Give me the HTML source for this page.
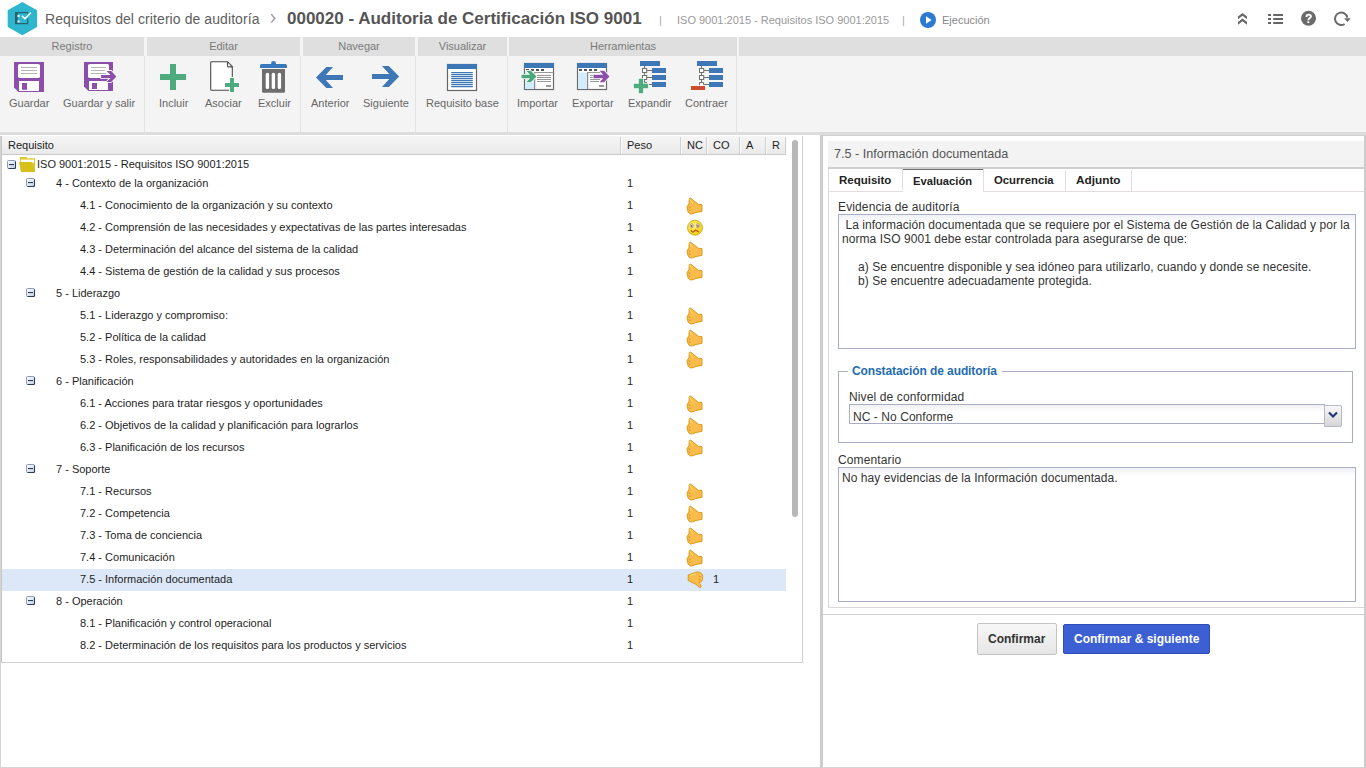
<!DOCTYPE html>
<html><head><meta charset="utf-8">
<style>
*{box-sizing:border-box;margin:0;padding:0}
html,body{width:1366px;height:768px;overflow:hidden;background:#fff;font-family:"Liberation Sans",sans-serif;position:relative}
.a{position:absolute}
.t{position:absolute;white-space:pre;line-height:1}
svg{position:absolute;overflow:visible}
/* toolbar */
#tb{position:absolute;left:0;top:37px;width:1366px;height:95px;background:#f4f4f4}
.gh{position:absolute;top:37px;height:19px;background:#dfdfdf;color:#7a7a7a;font-size:11px;text-align:center;line-height:19px}
.sep{position:absolute;top:56px;height:76px;width:1px;background:#e3e3e3}
.gt{font-size:11px;color:#222}
.gr{font-size:11px;color:#1e1e1e}
.tab{font-weight:bold;color:#222}
.fl{font-size:12px;color:#333;letter-spacing:0.13px}
.fx{font-size:12px;color:#333;letter-spacing:0.06px}
.lbl{position:absolute;top:97px;font-size:11px;color:#666;white-space:pre;line-height:12px}
</style></head><body>

<!-- ===== TOP BAR ===== -->
<svg style="left:0;top:0" width="50" height="37" viewBox="0 0 50 37">
  <polygon points="22.4,3 36.2,10.9 36.2,26.5 22.4,34.3 8.6,26.5 8.6,10.9" fill="#2db6cd" stroke="#2db6cd" stroke-width="1.8" stroke-linejoin="round"/>
  <rect x="15.6" y="12.6" width="12" height="11" fill="none" stroke="#2a5f73" stroke-width="1.2"/>
  <rect x="15" y="12" width="2.8" height="12" fill="#2a5f73"/>
  <rect x="17.4" y="15" width="2.2" height="1.9" fill="#e8f7fa"/>
  <rect x="17.4" y="20.5" width="2.2" height="1.9" fill="#e8f7fa"/>
  <polyline points="21.8,15.9 25,18.7 30.8,12.8" fill="none" stroke="#2db6cd" stroke-width="3.4"/>
  <polyline points="21.8,15.9 25,18.7 30.8,12.8" fill="none" stroke="#fff" stroke-width="1.6"/>
</svg>
<div class="t" style="left:45px;top:12px;font-size:14px;color:#606060;letter-spacing:0.08px">Requisitos del criterio de auditoría</div>
<svg style="left:268px;top:13px" width="10" height="12" viewBox="0 0 10 12"><polygon points="2.3,1 4.2,1 7.8,5.4 4.2,9.8 2.3,9.8 5.6,5.4" fill="#a4a4a4"/></svg>
<div class="t" style="left:287px;top:10px;font-size:17px;font-weight:bold;color:#555">000020 - Auditoria de Certificación ISO 9001</div>
<div class="t" style="left:659px;top:15px;font-size:11px;color:#aaa">|</div>
<div class="t" style="left:677px;top:15px;font-size:11px;color:#999">ISO 9001:2015 - Requisitos ISO 9001:2015</div>
<div class="t" style="left:902px;top:15px;font-size:11px;color:#aaa">|</div>
<svg style="left:920px;top:12px" width="17" height="17" viewBox="0 0 17 17"><circle cx="8" cy="8" r="8" fill="#2b7bd0"/><polygon points="6,4.2 11.6,8 6,11.8" fill="#fff"/></svg>
<div class="t" style="left:942px;top:15px;font-size:11px;color:#888">Ejecución</div>

<!-- right icons -->
<svg style="left:1237px;top:12px" width="12" height="14" viewBox="0 0 12 14">
  <polygon points="1,4.5 5.5,1 10,4.5 10,7.2 5.5,3.8 1,7.2" fill="#666"/>
  <polygon points="1,10 5.5,6.5 10,10 10,12.8 5.5,9.3 1,12.8" fill="#666"/>
</svg>
<svg style="left:1268px;top:13px" width="16" height="12" viewBox="0 0 16 12">
  <rect x="0" y="1" width="3" height="2" fill="#666"/><rect x="5.2" y="1" width="9.8" height="2" fill="#666"/>
  <rect x="0" y="5" width="3" height="2" fill="#666"/><rect x="5.2" y="5" width="9.8" height="2" fill="#666"/>
  <rect x="0" y="9" width="3" height="2" fill="#666"/><rect x="5.2" y="9" width="9.8" height="2" fill="#666"/>
</svg>
<svg style="left:1300px;top:10px" width="17" height="17" viewBox="0 0 17 17">
  <circle cx="8.5" cy="8.3" r="7.5" fill="#6b6b6b"/>
  <path d="M6.5,6.9 C6.5,5.1 7.5,4.6 8.7,4.6 C10,4.6 10.9,5.3 10.9,6.5 C10.9,8 8.3,8.2 8.3,10.3" fill="none" stroke="#fff" stroke-width="1.9"/>
  <rect x="7.3" y="11.3" width="2" height="1.8" fill="#fff"/>
</svg>
<svg style="left:1332px;top:10px" width="20" height="17" viewBox="0 0 20 17">
  <path d="M12.6,14 A6.2,6.2 0 1 1 15.3,7.6" fill="none" stroke="#6b6b6b" stroke-width="2"/>
  <polygon points="12.1,8.2 18.8,8.2 15.5,11.9" fill="#6b6b6b"/>
</svg>

<!-- ===== TOOLBAR ===== -->
<div id="tb"></div>
<div class="gh" style="left:0;width:144px">Registro</div>
<div class="gh" style="left:147px;width:153px">Editar</div>
<div class="gh" style="left:303px;width:112px">Navegar</div>
<div class="gh" style="left:418px;width:89px">Visualizar</div>
<div class="gh" style="left:509px;width:228px">Herramientas</div>
<div class="gh" style="left:739px;width:627px"></div>
<div class="sep" style="left:144px"></div>
<div class="sep" style="left:300px"></div>
<div class="sep" style="left:415px"></div>
<div class="sep" style="left:507px"></div>
<div class="sep" style="left:736px"></div>
<div class="a" style="left:0;top:132px;width:1366px;height:3px;background:#dcdcdc"></div>
<div class="a" style="left:820px;top:135px;width:546px;height:1px;background:#d2d2d2"></div>

<!-- labels -->
<div class="lbl" style="left:9px">Guardar</div>
<div class="lbl" style="left:63px">Guardar y salir</div>
<div class="lbl" style="left:159px">Incluir</div>
<div class="lbl" style="left:205px">Asociar</div>
<div class="lbl" style="left:258px">Excluir</div>
<div class="lbl" style="left:311px">Anterior</div>
<div class="lbl" style="left:363px">Siguiente</div>
<div class="lbl" style="left:426px">Requisito base</div>
<div class="lbl" style="left:517px">Importar</div>
<div class="lbl" style="left:572px">Exportar</div>
<div class="lbl" style="left:628px">Expandir</div>
<div class="lbl" style="left:685px">Contraer</div>

<!-- ICONS -->
<!-- Guardar floppy -->
<svg style="left:0;top:0" width="1366" height="136" viewBox="0 0 1366 136">
  <path d="M14,62 H44 V92 H18.5 L14,87.5 Z" fill="#8b4fab"/>
  <rect x="18" y="64" width="22" height="14" rx="1.8" fill="#fff"/>
  <rect x="21" y="67" width="16" height="1" fill="#b4b4b4"/>
  <rect x="21" y="70" width="16" height="1" fill="#b4b4b4"/>
  <rect x="21" y="73" width="16" height="1" fill="#b4b4b4"/>
  <rect x="19" y="81" width="20" height="10" fill="#fff"/>
  <rect x="22" y="83" width="5" height="6.8" fill="#8b4fab"/>
  <!-- Guardar y salir -->
  <path d="M84,62 H113 V91 H88.5 L84,86.5 Z" fill="#8b4fab"/>
  <rect x="88" y="64" width="21" height="14" rx="1.8" fill="#fff"/>
  <rect x="91" y="67" width="15" height="1" fill="#b4b4b4"/>
  <rect x="91" y="70" width="15" height="1" fill="#b4b4b4"/>
  <rect x="91" y="73" width="15" height="1" fill="#b4b4b4"/>
  <rect x="89" y="81" width="19" height="9" fill="#fff"/>
  <rect x="92" y="83" width="5" height="6" fill="#8b4fab"/>
  <path d="M101.1,74.9 H110.6 L106.4,70.9 H111.2 L116.4,76.4 L111.2,81.9 H106.4 L110.6,77.9 H101.1 Z" fill="#8b4fab" stroke="#fff" stroke-width="1.6" stroke-linejoin="miter" paint-order="stroke"/>
  <!-- Incluir plus -->
  <rect x="170" y="64" width="6" height="26" fill="#4dab7e"/>
  <rect x="160" y="74" width="26" height="6" fill="#4dab7e"/>
  <!-- Asociar doc -->
  <path d="M210.7,61.7 H227.5 L232.3,66.5 V90.3 H210.7 Z" fill="#fff"/>
  <path d="M232.3,77 V66.5 L227.5,61.7 H211.5 Q210.7,61.7 210.7,62.5 V89.5 Q210.7,90.3 211.5,90.3 H229" fill="none" stroke="#4a4a4a" stroke-width="1.1"/>
  <path d="M227.5,61.7 V66 Q227.5,66.9 228.4,66.9 H232.3" fill="none" stroke="#4a4a4a" stroke-width="1.1"/>
  <path d="M230,78 H234 V83 H239 V87 H234 V92 H230 V87 H225 V83 H230 Z" fill="#4dab7e" stroke="#fff" stroke-width="1.2" paint-order="stroke"/>
  <!-- Excluir trash -->
  <path d="M260,68 V65.5 Q260,64 261.5,64 H271.2 V62.8 Q271.2,61 273.5,61 Q275.9,61 275.9,62.8 V64 H285.4 Q287,64 287,65.5 V68 Z" fill="#3a78be"/>
  <path d="M262,69 H285 V91.2 Q285,92.7 283.5,92.7 H263.5 Q262,92.7 262,91.2 Z" fill="#6e6e6e"/>
  <rect x="265.7" y="72.7" width="3.4" height="16.4" rx="1.7" fill="#fff"/>
  <rect x="271.7" y="72.7" width="3.4" height="16.4" rx="1.7" fill="#fff"/>
  <rect x="277.7" y="72.7" width="3.4" height="16.4" rx="1.7" fill="#fff"/>
  <!-- Anterior -->
  <path d="M316,77.5 L326.3,67 H333 L325.8,74.9 H343 V80.1 H325.8 L333,88 H326.3 Z" fill="#3d77b5"/>
  <!-- Siguiente -->
  <path d="M399.2,76.5 L388.8,66 H382 L389.3,74 H372 V79 H389.3 L382,87 H388.8 Z" fill="#3d77b5"/>
  <!-- Requisito base window -->
  <rect x="447.5" y="64.5" width="29" height="26" fill="#fff" stroke="#666" stroke-width="1.2"/>
  <rect x="447" y="64" width="30" height="5" fill="#3d77b5"/>
  <g fill="#3d77b5">
    <rect x="451" y="72" width="22" height="1.2" rx="0.6"/><rect x="451" y="74" width="22" height="1.2" rx="0.6"/>
    <rect x="451" y="76" width="22" height="1.2" rx="0.6"/><rect x="451" y="78" width="22" height="1.2" rx="0.6"/>
    <rect x="451" y="80" width="22" height="1.2" rx="0.6"/><rect x="451" y="82" width="22" height="1.2" rx="0.6"/>
    <rect x="451" y="84" width="22" height="1.2" rx="0.6"/><rect x="451" y="86" width="22" height="1.2" rx="0.6"/>
  </g>
  <!-- Importar -->
  <rect x="524.5" y="63.5" width="29" height="26" fill="#fff" stroke="#6a6a6a" stroke-width="1.2"/>
  <rect x="525" y="72.5" width="9.5" height="16.5" fill="#d2ecfb"/>
  <rect x="534.2" y="72" width="1" height="17" fill="#777"/>
  <rect x="534" y="72" width="19.5" height="1" fill="#999"/>
  <rect x="524" y="63" width="30" height="5" fill="#3d77b5"/>
  <g fill="#555"><rect x="526" y="69" width="3" height="2"/><rect x="531" y="69" width="3" height="2"/><rect x="536" y="69" width="3" height="2"/><rect x="541" y="69" width="3" height="2"/></g>
  <g fill="#999"><rect x="537" y="75" width="14" height="1"/><rect x="537" y="77" width="14" height="1"/><rect x="537" y="79" width="14" height="1"/><rect x="537" y="81" width="14" height="1"/><rect x="546" y="85" width="5" height="2"/></g>
  <path d="M521.5,74.8 H530 L526.4,70.8 H530.8 L536.5,76.5 L530.8,82.2 H526.4 L530,78.2 H521.5 Z" fill="#4aa97b" stroke="#fff" stroke-width="1.4" stroke-linejoin="round" paint-order="stroke"/>
  <!-- Exportar -->
  <rect x="577.5" y="63.5" width="29" height="26" fill="#fff" stroke="#6a6a6a" stroke-width="1.2"/>
  <rect x="578" y="72.5" width="9.5" height="16.5" fill="#d2ecfb"/>
  <rect x="587.2" y="72" width="1" height="17" fill="#777"/>
  <rect x="587" y="72" width="19.5" height="1" fill="#999"/>
  <rect x="577" y="63" width="30" height="5" fill="#3d77b5"/>
  <g fill="#555"><rect x="579" y="69" width="3" height="2"/><rect x="584" y="69" width="3" height="2"/><rect x="589" y="69" width="3" height="2"/><rect x="594" y="69" width="3" height="2"/></g>
  <g fill="#999"><rect x="590" y="75" width="3" height="1"/><rect x="590" y="77" width="3" height="1"/><rect x="590" y="79" width="10" height="1"/><rect x="590" y="81" width="9" height="1"/><rect x="599" y="85" width="5" height="2"/></g>
  <path d="M593.5,74.8 H603.2 L599.6,70.8 H604 L609.5,76.5 L604,82.2 H599.6 L603.2,78.2 H593.5 Z" fill="#8b4fab" stroke="#fff" stroke-width="1.4" stroke-linejoin="round" paint-order="stroke"/>
  <!-- Expandir -->
  <g fill="#3d77b5">
    <rect x="640" y="61" width="20" height="5"/>
    <rect x="652" y="68" width="14" height="5"/><rect x="652" y="75" width="14" height="5"/><rect x="652" y="82" width="14" height="5"/>
  </g>
  <g fill="none" stroke="#707070" stroke-width="1">
    <path d="M644.6,66 V68.5 M644.6,72.5 V75.5 M644.6,79.5 V82.5 H647 M646.8,70.5 H652 M646.8,77.5 H652 M649,84.5 H652"/>
    <rect x="642.5" y="68.5" width="4.2" height="4" fill="#fff"/><rect x="642.5" y="75.5" width="4.2" height="4" fill="#fff"/>
  </g>
  <path d="M638.8,78.8 H643.2 V83.8 H648.2 V88.2 H643.2 V93.2 H638.8 V88.2 H633.8 V83.8 H638.8 Z" fill="#4dab7e" stroke="#fff" stroke-width="1.2" paint-order="stroke"/>
  <!-- Contraer -->
  <g fill="#3d77b5">
    <rect x="697" y="61" width="20" height="5"/>
    <rect x="709" y="68" width="14" height="5"/><rect x="709" y="75" width="14" height="5"/><rect x="709" y="82" width="14" height="5"/>
  </g>
  <g fill="none" stroke="#707070" stroke-width="1">
    <path d="M701.5,66 V68.5 M701.5,72.5 V75.5 M701.5,79.5 V82.5 M699.5,85 V82.5 H703.5 V84.5 H709 M703.7,70.5 H709 M703.7,77.5 H709"/>
    <rect x="699.5" y="68.5" width="4.2" height="4" fill="#fff"/><rect x="699.5" y="75.5" width="4.2" height="4" fill="#fff"/>
  </g>
  <rect x="691" y="86" width="14" height="4" fill="#d04a2c"/>
</svg>


<!-- ===== LEFT PANEL ===== -->
<!-- GRID -->
<div class="a" style="left:0;top:136px;width:1px;height:632px;background:#d4d4d4"></div>
<div class="a" style="left:0;top:767px;width:821px;height:1px;background:#d4d4d4"></div>
<div class="a" style="left:1px;top:136px;width:802px;height:527px;border:1px solid #cfcfcf;border-top:0;border-left:1px solid #c4c4c4;background:#fff"></div>
<div class="a" style="left:2px;top:136px;width:784px;height:19px;background:linear-gradient(#f6f6f6,#e9e9e9);border-bottom:1px solid #c9c9c9"></div>
<div class="a" style="left:620px;top:137px;width:1px;height:17px;background:#d0d0d0"></div>
<div class="a" style="left:621px;top:137px;width:1px;height:17px;background:#fafafa"></div>
<div class="a" style="left:680px;top:137px;width:1px;height:17px;background:#d0d0d0"></div>
<div class="a" style="left:681px;top:137px;width:1px;height:17px;background:#fafafa"></div>
<div class="a" style="left:706px;top:137px;width:1px;height:17px;background:#d0d0d0"></div>
<div class="a" style="left:707px;top:137px;width:1px;height:17px;background:#fafafa"></div>
<div class="a" style="left:739px;top:137px;width:1px;height:17px;background:#d0d0d0"></div>
<div class="a" style="left:740px;top:137px;width:1px;height:17px;background:#fafafa"></div>
<div class="a" style="left:765px;top:137px;width:1px;height:17px;background:#d0d0d0"></div>
<div class="a" style="left:766px;top:137px;width:1px;height:17px;background:#fafafa"></div>
<div class="a" style="left:785px;top:137px;width:1px;height:17px;background:#d0d0d0"></div>
<div class="a" style="left:786px;top:137px;width:1px;height:17px;background:#fafafa"></div>
<div class="t gt" style="left:8px;top:140px">Requisito</div>
<div class="t gt" style="left:627px;top:140px">Peso</div>
<div class="t gt" style="left:687px;top:140px">NC</div>
<div class="t gt" style="left:713px;top:140px">CO</div>
<div class="t gt" style="left:746px;top:140px">A</div>
<div class="t gt" style="left:772px;top:140px">R</div>
<div class="a" style="left:792px;top:140px;width:6px;height:377px;background:#b8b8b8;border-radius:3px"></div>
<div class="a" style="left:2px;top:569px;width:784px;height:22px;background:#dce8f8"></div>
<svg style="left:7px;top:160px" width="9" height="9" viewBox="0 0 9 9"><defs><linearGradient id="eg" x1="0" y1="0" x2="1" y2="1"><stop offset="0" stop-color="#fff"/><stop offset="1" stop-color="#c5d0e6"/></linearGradient></defs><rect x="0.5" y="0.5" width="8" height="8" rx="1.2" fill="url(#eg)" stroke="#8a9ab8" stroke-width="1"/><path d="M8.5,1.5 V7.5 Q8.5,8.5 7.5,8.5 H1.5" fill="none" stroke="#2a3d5a" stroke-width="1.1"/><rect x="2" y="4" width="5" height="1.1" fill="#2a3d5a"/></svg>
<svg style="left:19px;top:157px" width="17" height="15" viewBox="0 0 17 15"><path d="M0.8,0 H7.6 L8.4,1.2 H16 V15 H2 Z" fill="#e0c92e"/><rect x="2" y="2.6" width="13" height="3" fill="#fff"/><path d="M0,5 H12.6 L16,15 H2 Z" fill="#d8c01c"/></svg>
<div class="t gr" style="left:37px;top:159px">ISO 9001:2015 - Requisitos ISO 9001:2015</div>
<svg style="left:26px;top:178px" width="9" height="9" viewBox="0 0 9 9"><defs><linearGradient id="eg" x1="0" y1="0" x2="1" y2="1"><stop offset="0" stop-color="#fff"/><stop offset="1" stop-color="#c5d0e6"/></linearGradient></defs><rect x="0.5" y="0.5" width="8" height="8" rx="1.2" fill="url(#eg)" stroke="#8a9ab8" stroke-width="1"/><path d="M8.5,1.5 V7.5 Q8.5,8.5 7.5,8.5 H1.5" fill="none" stroke="#2a3d5a" stroke-width="1.1"/><rect x="2" y="4" width="5" height="1.1" fill="#2a3d5a"/></svg>
<div class="t gr" style="left:56px;top:178px">4 - Contexto de la organización</div>
<div class="t gr" style="left:627px;top:178px">1</div>
<div class="t gr" style="left:80px;top:200px">4.1 - Conocimiento de la organización y su contexto</div>
<div class="t gr" style="left:627px;top:200px">1</div>
<svg style="left:684px;top:196px" width="22" height="20" viewBox="0 0 22 20"><path d="M6,2 C7,2 8,3 9,4 L14.6,8.4 L18,8.6 L18,15.4 L11,16.7 C10,17.5 8,18 6.5,18 C4.5,17.5 3.5,15 3.1,12 C3,10 3.6,9 5,8.3 C4.8,6 5,3 6,2 Z" fill="#f9bb4c" stroke="#d9940f" stroke-width="0.9"/><path d="M5.8,3.5 C6.5,5 7.5,6.5 9,7.5" fill="none" stroke="#ffe27a" stroke-width="1"/><path d="M4.6,10.4 C5.4,10.6 6,11.2 6.2,12 M4.6,13.4 C5.4,13.6 6,14.2 6.2,15" fill="none" stroke="#c88a10" stroke-width="0.8"/></svg>
<div class="t gr" style="left:80px;top:222px">4.2 - Comprensión de las necesidades y expectativas de las partes interesadas</div>
<div class="t gr" style="left:627px;top:222px">1</div>
<svg style="left:687px;top:219px" width="16" height="17" viewBox="0 0 16 17"><defs><radialGradient id="sg" cx="0.4" cy="0.35" r="0.7"><stop offset="0" stop-color="#fff56a"/><stop offset="1" stop-color="#f2cc10"/></radialGradient></defs><circle cx="8" cy="8.7" r="7.5" fill="url(#sg)" stroke="#c9a60c" stroke-width="0.8"/><ellipse cx="4.8" cy="6.7" rx="1.4" ry="2.2" fill="#e6dcf0" stroke="#8a7a8a" stroke-width="0.6"/><ellipse cx="10.9" cy="6.7" rx="1.4" ry="2.2" fill="#e6dcf0" stroke="#8a7a8a" stroke-width="0.6"/><ellipse cx="4.8" cy="6.9" rx="0.6" ry="1" fill="#7a2a50"/><ellipse cx="10.9" cy="6.9" rx="0.6" ry="1" fill="#7a2a50"/><path d="M4.2,11.5 C5,13.5 6,13.2 7.2,12.2 C8,11.2 9,11 10,11.8 C10.8,12.5 11.4,13 11.6,12.9" fill="none" stroke="#c0501a" stroke-width="1.3" stroke-linecap="round"/></svg>
<div class="t gr" style="left:80px;top:244px">4.3 - Determinación del alcance del sistema de la calidad</div>
<div class="t gr" style="left:627px;top:244px">1</div>
<svg style="left:684px;top:240px" width="22" height="20" viewBox="0 0 22 20"><path d="M6,2 C7,2 8,3 9,4 L14.6,8.4 L18,8.6 L18,15.4 L11,16.7 C10,17.5 8,18 6.5,18 C4.5,17.5 3.5,15 3.1,12 C3,10 3.6,9 5,8.3 C4.8,6 5,3 6,2 Z" fill="#f9bb4c" stroke="#d9940f" stroke-width="0.9"/><path d="M5.8,3.5 C6.5,5 7.5,6.5 9,7.5" fill="none" stroke="#ffe27a" stroke-width="1"/><path d="M4.6,10.4 C5.4,10.6 6,11.2 6.2,12 M4.6,13.4 C5.4,13.6 6,14.2 6.2,15" fill="none" stroke="#c88a10" stroke-width="0.8"/></svg>
<div class="t gr" style="left:80px;top:266px">4.4 - Sistema de gestión de la calidad y sus procesos</div>
<div class="t gr" style="left:627px;top:266px">1</div>
<svg style="left:684px;top:262px" width="22" height="20" viewBox="0 0 22 20"><path d="M6,2 C7,2 8,3 9,4 L14.6,8.4 L18,8.6 L18,15.4 L11,16.7 C10,17.5 8,18 6.5,18 C4.5,17.5 3.5,15 3.1,12 C3,10 3.6,9 5,8.3 C4.8,6 5,3 6,2 Z" fill="#f9bb4c" stroke="#d9940f" stroke-width="0.9"/><path d="M5.8,3.5 C6.5,5 7.5,6.5 9,7.5" fill="none" stroke="#ffe27a" stroke-width="1"/><path d="M4.6,10.4 C5.4,10.6 6,11.2 6.2,12 M4.6,13.4 C5.4,13.6 6,14.2 6.2,15" fill="none" stroke="#c88a10" stroke-width="0.8"/></svg>
<svg style="left:26px;top:288px" width="9" height="9" viewBox="0 0 9 9"><defs><linearGradient id="eg" x1="0" y1="0" x2="1" y2="1"><stop offset="0" stop-color="#fff"/><stop offset="1" stop-color="#c5d0e6"/></linearGradient></defs><rect x="0.5" y="0.5" width="8" height="8" rx="1.2" fill="url(#eg)" stroke="#8a9ab8" stroke-width="1"/><path d="M8.5,1.5 V7.5 Q8.5,8.5 7.5,8.5 H1.5" fill="none" stroke="#2a3d5a" stroke-width="1.1"/><rect x="2" y="4" width="5" height="1.1" fill="#2a3d5a"/></svg>
<div class="t gr" style="left:56px;top:288px">5 - Liderazgo</div>
<div class="t gr" style="left:627px;top:288px">1</div>
<div class="t gr" style="left:80px;top:310px">5.1 - Liderazgo y compromiso:</div>
<div class="t gr" style="left:627px;top:310px">1</div>
<svg style="left:684px;top:306px" width="22" height="20" viewBox="0 0 22 20"><path d="M6,2 C7,2 8,3 9,4 L14.6,8.4 L18,8.6 L18,15.4 L11,16.7 C10,17.5 8,18 6.5,18 C4.5,17.5 3.5,15 3.1,12 C3,10 3.6,9 5,8.3 C4.8,6 5,3 6,2 Z" fill="#f9bb4c" stroke="#d9940f" stroke-width="0.9"/><path d="M5.8,3.5 C6.5,5 7.5,6.5 9,7.5" fill="none" stroke="#ffe27a" stroke-width="1"/><path d="M4.6,10.4 C5.4,10.6 6,11.2 6.2,12 M4.6,13.4 C5.4,13.6 6,14.2 6.2,15" fill="none" stroke="#c88a10" stroke-width="0.8"/></svg>
<div class="t gr" style="left:80px;top:332px">5.2 - Política de la calidad</div>
<div class="t gr" style="left:627px;top:332px">1</div>
<svg style="left:684px;top:328px" width="22" height="20" viewBox="0 0 22 20"><path d="M6,2 C7,2 8,3 9,4 L14.6,8.4 L18,8.6 L18,15.4 L11,16.7 C10,17.5 8,18 6.5,18 C4.5,17.5 3.5,15 3.1,12 C3,10 3.6,9 5,8.3 C4.8,6 5,3 6,2 Z" fill="#f9bb4c" stroke="#d9940f" stroke-width="0.9"/><path d="M5.8,3.5 C6.5,5 7.5,6.5 9,7.5" fill="none" stroke="#ffe27a" stroke-width="1"/><path d="M4.6,10.4 C5.4,10.6 6,11.2 6.2,12 M4.6,13.4 C5.4,13.6 6,14.2 6.2,15" fill="none" stroke="#c88a10" stroke-width="0.8"/></svg>
<div class="t gr" style="left:80px;top:354px">5.3 - Roles, responsabilidades y autoridades en la organización</div>
<div class="t gr" style="left:627px;top:354px">1</div>
<svg style="left:684px;top:350px" width="22" height="20" viewBox="0 0 22 20"><path d="M6,2 C7,2 8,3 9,4 L14.6,8.4 L18,8.6 L18,15.4 L11,16.7 C10,17.5 8,18 6.5,18 C4.5,17.5 3.5,15 3.1,12 C3,10 3.6,9 5,8.3 C4.8,6 5,3 6,2 Z" fill="#f9bb4c" stroke="#d9940f" stroke-width="0.9"/><path d="M5.8,3.5 C6.5,5 7.5,6.5 9,7.5" fill="none" stroke="#ffe27a" stroke-width="1"/><path d="M4.6,10.4 C5.4,10.6 6,11.2 6.2,12 M4.6,13.4 C5.4,13.6 6,14.2 6.2,15" fill="none" stroke="#c88a10" stroke-width="0.8"/></svg>
<svg style="left:26px;top:376px" width="9" height="9" viewBox="0 0 9 9"><defs><linearGradient id="eg" x1="0" y1="0" x2="1" y2="1"><stop offset="0" stop-color="#fff"/><stop offset="1" stop-color="#c5d0e6"/></linearGradient></defs><rect x="0.5" y="0.5" width="8" height="8" rx="1.2" fill="url(#eg)" stroke="#8a9ab8" stroke-width="1"/><path d="M8.5,1.5 V7.5 Q8.5,8.5 7.5,8.5 H1.5" fill="none" stroke="#2a3d5a" stroke-width="1.1"/><rect x="2" y="4" width="5" height="1.1" fill="#2a3d5a"/></svg>
<div class="t gr" style="left:56px;top:376px">6 - Planificación</div>
<div class="t gr" style="left:627px;top:376px">1</div>
<div class="t gr" style="left:80px;top:398px">6.1 - Acciones para tratar riesgos y oportunidades</div>
<div class="t gr" style="left:627px;top:398px">1</div>
<svg style="left:684px;top:394px" width="22" height="20" viewBox="0 0 22 20"><path d="M6,2 C7,2 8,3 9,4 L14.6,8.4 L18,8.6 L18,15.4 L11,16.7 C10,17.5 8,18 6.5,18 C4.5,17.5 3.5,15 3.1,12 C3,10 3.6,9 5,8.3 C4.8,6 5,3 6,2 Z" fill="#f9bb4c" stroke="#d9940f" stroke-width="0.9"/><path d="M5.8,3.5 C6.5,5 7.5,6.5 9,7.5" fill="none" stroke="#ffe27a" stroke-width="1"/><path d="M4.6,10.4 C5.4,10.6 6,11.2 6.2,12 M4.6,13.4 C5.4,13.6 6,14.2 6.2,15" fill="none" stroke="#c88a10" stroke-width="0.8"/></svg>
<div class="t gr" style="left:80px;top:420px">6.2 - Objetivos de la calidad y planificación para lograrlos</div>
<div class="t gr" style="left:627px;top:420px">1</div>
<svg style="left:684px;top:416px" width="22" height="20" viewBox="0 0 22 20"><path d="M6,2 C7,2 8,3 9,4 L14.6,8.4 L18,8.6 L18,15.4 L11,16.7 C10,17.5 8,18 6.5,18 C4.5,17.5 3.5,15 3.1,12 C3,10 3.6,9 5,8.3 C4.8,6 5,3 6,2 Z" fill="#f9bb4c" stroke="#d9940f" stroke-width="0.9"/><path d="M5.8,3.5 C6.5,5 7.5,6.5 9,7.5" fill="none" stroke="#ffe27a" stroke-width="1"/><path d="M4.6,10.4 C5.4,10.6 6,11.2 6.2,12 M4.6,13.4 C5.4,13.6 6,14.2 6.2,15" fill="none" stroke="#c88a10" stroke-width="0.8"/></svg>
<div class="t gr" style="left:80px;top:442px">6.3 - Planificación de los recursos</div>
<div class="t gr" style="left:627px;top:442px">1</div>
<svg style="left:684px;top:438px" width="22" height="20" viewBox="0 0 22 20"><path d="M6,2 C7,2 8,3 9,4 L14.6,8.4 L18,8.6 L18,15.4 L11,16.7 C10,17.5 8,18 6.5,18 C4.5,17.5 3.5,15 3.1,12 C3,10 3.6,9 5,8.3 C4.8,6 5,3 6,2 Z" fill="#f9bb4c" stroke="#d9940f" stroke-width="0.9"/><path d="M5.8,3.5 C6.5,5 7.5,6.5 9,7.5" fill="none" stroke="#ffe27a" stroke-width="1"/><path d="M4.6,10.4 C5.4,10.6 6,11.2 6.2,12 M4.6,13.4 C5.4,13.6 6,14.2 6.2,15" fill="none" stroke="#c88a10" stroke-width="0.8"/></svg>
<svg style="left:26px;top:464px" width="9" height="9" viewBox="0 0 9 9"><defs><linearGradient id="eg" x1="0" y1="0" x2="1" y2="1"><stop offset="0" stop-color="#fff"/><stop offset="1" stop-color="#c5d0e6"/></linearGradient></defs><rect x="0.5" y="0.5" width="8" height="8" rx="1.2" fill="url(#eg)" stroke="#8a9ab8" stroke-width="1"/><path d="M8.5,1.5 V7.5 Q8.5,8.5 7.5,8.5 H1.5" fill="none" stroke="#2a3d5a" stroke-width="1.1"/><rect x="2" y="4" width="5" height="1.1" fill="#2a3d5a"/></svg>
<div class="t gr" style="left:56px;top:464px">7 - Soporte</div>
<div class="t gr" style="left:627px;top:464px">1</div>
<div class="t gr" style="left:80px;top:486px">7.1 - Recursos</div>
<div class="t gr" style="left:627px;top:486px">1</div>
<svg style="left:684px;top:482px" width="22" height="20" viewBox="0 0 22 20"><path d="M6,2 C7,2 8,3 9,4 L14.6,8.4 L18,8.6 L18,15.4 L11,16.7 C10,17.5 8,18 6.5,18 C4.5,17.5 3.5,15 3.1,12 C3,10 3.6,9 5,8.3 C4.8,6 5,3 6,2 Z" fill="#f9bb4c" stroke="#d9940f" stroke-width="0.9"/><path d="M5.8,3.5 C6.5,5 7.5,6.5 9,7.5" fill="none" stroke="#ffe27a" stroke-width="1"/><path d="M4.6,10.4 C5.4,10.6 6,11.2 6.2,12 M4.6,13.4 C5.4,13.6 6,14.2 6.2,15" fill="none" stroke="#c88a10" stroke-width="0.8"/></svg>
<div class="t gr" style="left:80px;top:508px">7.2 - Competencia</div>
<div class="t gr" style="left:627px;top:508px">1</div>
<svg style="left:684px;top:504px" width="22" height="20" viewBox="0 0 22 20"><path d="M6,2 C7,2 8,3 9,4 L14.6,8.4 L18,8.6 L18,15.4 L11,16.7 C10,17.5 8,18 6.5,18 C4.5,17.5 3.5,15 3.1,12 C3,10 3.6,9 5,8.3 C4.8,6 5,3 6,2 Z" fill="#f9bb4c" stroke="#d9940f" stroke-width="0.9"/><path d="M5.8,3.5 C6.5,5 7.5,6.5 9,7.5" fill="none" stroke="#ffe27a" stroke-width="1"/><path d="M4.6,10.4 C5.4,10.6 6,11.2 6.2,12 M4.6,13.4 C5.4,13.6 6,14.2 6.2,15" fill="none" stroke="#c88a10" stroke-width="0.8"/></svg>
<div class="t gr" style="left:80px;top:530px">7.3 - Toma de conciencia</div>
<div class="t gr" style="left:627px;top:530px">1</div>
<svg style="left:684px;top:526px" width="22" height="20" viewBox="0 0 22 20"><path d="M6,2 C7,2 8,3 9,4 L14.6,8.4 L18,8.6 L18,15.4 L11,16.7 C10,17.5 8,18 6.5,18 C4.5,17.5 3.5,15 3.1,12 C3,10 3.6,9 5,8.3 C4.8,6 5,3 6,2 Z" fill="#f9bb4c" stroke="#d9940f" stroke-width="0.9"/><path d="M5.8,3.5 C6.5,5 7.5,6.5 9,7.5" fill="none" stroke="#ffe27a" stroke-width="1"/><path d="M4.6,10.4 C5.4,10.6 6,11.2 6.2,12 M4.6,13.4 C5.4,13.6 6,14.2 6.2,15" fill="none" stroke="#c88a10" stroke-width="0.8"/></svg>
<div class="t gr" style="left:80px;top:552px">7.4 - Comunicación</div>
<div class="t gr" style="left:627px;top:552px">1</div>
<svg style="left:684px;top:548px" width="22" height="20" viewBox="0 0 22 20"><path d="M6,2 C7,2 8,3 9,4 L14.6,8.4 L18,8.6 L18,15.4 L11,16.7 C10,17.5 8,18 6.5,18 C4.5,17.5 3.5,15 3.1,12 C3,10 3.6,9 5,8.3 C4.8,6 5,3 6,2 Z" fill="#f9bb4c" stroke="#d9940f" stroke-width="0.9"/><path d="M5.8,3.5 C6.5,5 7.5,6.5 9,7.5" fill="none" stroke="#ffe27a" stroke-width="1"/><path d="M4.6,10.4 C5.4,10.6 6,11.2 6.2,12 M4.6,13.4 C5.4,13.6 6,14.2 6.2,15" fill="none" stroke="#c88a10" stroke-width="0.8"/></svg>
<div class="t gr" style="left:80px;top:574px">7.5 - Información documentada</div>
<div class="t gr" style="left:627px;top:574px">1</div>
<svg style="left:684px;top:569px" width="22" height="22" viewBox="0 0 22 22"><path d="M4.2,6 L12,3.2 C14,2.5 17,3 18.4,6 C18.8,8 18.8,10 18,12 C17.4,12.8 16.4,13.2 15.2,13.5 C16.2,15 17.4,16.6 17.2,17.8 C16.8,18.6 15.8,18.6 15,18 L12,15.4 L4.2,11.6 Z" fill="#f9bb4c" stroke="#d9940f" stroke-width="0.9"/><path d="M6,6.5 C8,5.5 10,5.2 12,5" fill="none" stroke="#ffe27a" stroke-width="1"/><path d="M15,7 C15.6,7.6 16.2,8 17,8 M14.6,10 C15.2,10.6 15.8,11 16.6,11" fill="none" stroke="#c88a10" stroke-width="0.8"/></svg>
<div class="t gr" style="left:713px;top:574px">1</div>
<svg style="left:26px;top:596px" width="9" height="9" viewBox="0 0 9 9"><defs><linearGradient id="eg" x1="0" y1="0" x2="1" y2="1"><stop offset="0" stop-color="#fff"/><stop offset="1" stop-color="#c5d0e6"/></linearGradient></defs><rect x="0.5" y="0.5" width="8" height="8" rx="1.2" fill="url(#eg)" stroke="#8a9ab8" stroke-width="1"/><path d="M8.5,1.5 V7.5 Q8.5,8.5 7.5,8.5 H1.5" fill="none" stroke="#2a3d5a" stroke-width="1.1"/><rect x="2" y="4" width="5" height="1.1" fill="#2a3d5a"/></svg>
<div class="t gr" style="left:56px;top:596px">8 - Operación</div>
<div class="t gr" style="left:627px;top:596px">1</div>
<div class="t gr" style="left:80px;top:618px">8.1 - Planificación y control operacional</div>
<div class="t gr" style="left:627px;top:618px">1</div>
<div class="t gr" style="left:80px;top:640px">8.2 - Determinación de los requisitos para los productos y servicios</div>
<div class="t gr" style="left:627px;top:640px">1</div>
<!-- /GRID -->

<!-- ===== RIGHT PANEL ===== -->
<!-- RIGHT -->
<div class="a" style="left:820px;top:135px;width:3px;height:633px;background:#cccccc"></div>
<div class="a" style="left:1364px;top:136px;width:2px;height:632px;background:#cccccc"></div>
<div class="a" style="left:822px;top:767px;width:542px;height:1px;background:#d4d4d4"></div>
<!-- title -->
<div class="a" style="left:828px;top:141px;width:536px;height:26px;background:#f3f3f3"></div>
<div class="a" style="left:828px;top:167px;width:536px;height:2px;background:#cfcfcf"></div>
<div class="t" style="left:834px;top:148px;font-size:12.6px;color:#555">7.5 - Información documentada</div>
<!-- tab content box -->
<div class="a" style="left:828px;top:191px;width:536px;height:417px;border:1.5px solid #ddd6d6;border-top:0;border-right:0"></div>
<div class="a" style="left:828px;top:169px;width:1px;height:22px;background:#e2dcdc"></div>
<div class="a" style="left:828px;top:191px;width:536px;height:1px;background:#e2dcdc"></div>
<!-- tabs -->
<div class="a" style="left:902px;top:169px;width:1px;height:21px;background:#e2dcdc"></div>
<div class="a" style="left:1065px;top:170px;width:1px;height:21px;background:#e2dcdc"></div>
<div class="a" style="left:1131px;top:170px;width:1px;height:21px;background:#e2dcdc"></div>
<div class="a" style="left:903px;top:169px;width:80px;height:24px;background:#fff;border-top:1px solid #6e6e6e"></div>
<div class="a" style="left:983px;top:169px;width:1px;height:22px;background:#e2dcdc"></div>
<div class="t tab" style="left:839px;top:175px;font-size:11.5px">Requisito</div>
<div class="t tab" style="left:913px;top:176px;font-size:11.2px">Evaluación</div>
<div class="t tab" style="left:994px;top:175px;font-size:11.3px">Ocurrencia</div>
<div class="t tab" style="left:1076px;top:175px;font-size:11.8px">Adjunto</div>
<!-- evidencia -->
<div class="t fl" style="left:838px;top:201px">Evidencia de auditoría</div>
<div class="a" style="left:838px;top:214px;width:518px;height:135px;border:1px solid #a9aec6;background:linear-gradient(#eef0f4,#fff 8px)"></div>
<div class="t fx" style="left:842px;top:219px"> La información documentada que se requiere por el Sistema de Gestión de la Calidad y por la</div>
<div class="t fx" style="left:842px;top:233px">norma ISO 9001 debe estar controlada para asegurarse de que:</div>
<div class="t fx" style="left:858px;top:261px">a) Se encuentre disponible y sea idóneo para utilizarlo, cuando y donde se necesite.</div>
<div class="t fx" style="left:858px;top:275px">b) Se encuentre adecuadamente protegida.</div>
<!-- fieldset -->
<div class="a" style="left:838px;top:371px;width:515px;height:72px;border:1px solid #a9aec6"></div>
<div class="a" style="left:848px;top:365px;width:154px;height:12px;background:#fff"></div>
<div class="t" style="left:852px;top:365px;font-size:12px;font-weight:bold;color:#1f6cb0;letter-spacing:-0.1px">Constatación de auditoría</div>
<div class="t fl" style="left:849px;top:391px">Nivel de conformidad</div>
<div class="a" style="left:849px;top:404px;width:476px;height:20px;border:1px solid #a9aec6;background:linear-gradient(#f0f0f0,#fff 40%)"></div>
<div class="t fx" style="left:853px;top:411px">NC - No Conforme</div>
<div class="a" style="left:1324px;top:405px;width:18px;height:22px;border:1px solid #b4b8c8;border-radius:0 2px 2px 0;background:linear-gradient(#f8f8f8,#d6d6d6)"></div>
<svg style="left:1327px;top:410px" width="12" height="10" viewBox="0 0 12 10"><polyline points="2,2.5 6,6.5 10,2.5" fill="none" stroke="#1e3a78" stroke-width="2.2"/></svg>
<!-- comentario -->
<div class="t fl" style="left:838px;top:454px">Comentario</div>
<div class="a" style="left:838px;top:467px;width:518px;height:135px;border:1px solid #a9aec6;background:linear-gradient(#eef0f4,#fff 8px)"></div>
<div class="t fx" style="left:842px;top:472px">No hay evidencias de la Información documentada.</div>
<!-- bottom line & buttons -->
<div class="a" style="left:822px;top:614px;width:542px;height:1px;background:#cfcfcf"></div>
<div class="a" style="left:977px;top:623px;width:80px;height:32px;border:1px solid #c4c4c4;border-radius:2px;background:linear-gradient(#f7f7f7,#e6e6e6)"></div>
<div class="t" style="left:988px;top:633px;font-size:12px;font-weight:bold;color:#333">Confirmar</div>
<div class="a" style="left:1063px;top:624px;width:147px;height:30px;border:1px solid #2f4db8;border-radius:2px;background:#3d5fd4"></div>
<div class="t" style="left:1074px;top:633px;font-size:12px;font-weight:bold;color:#fff">Confirmar &amp; siguiente</div>

<!-- /RIGHT -->

</body></html>
